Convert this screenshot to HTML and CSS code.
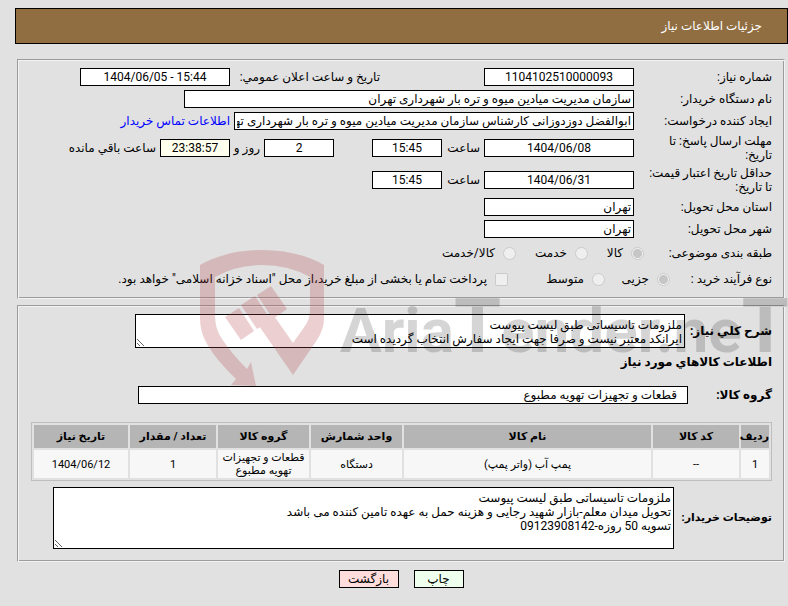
FILE: index.html
```
<!DOCTYPE html>
<html lang="fa" dir="rtl">
<head>
<meta charset="utf-8">
<title>جزئیات اطلاعات نیاز</title>
<link rel="stylesheet" href="styles.css">
</head>
<body>
<header class="title-bar">جزئیات اطلاعات نیاز</header>
<main>
<form class="need">
  <section class="panel summary">
    <div class="row">
      <label class="name" for="no">شماره نیاز:</label>
      <input class="field center w150" id="no" value="1104102510000093" readonly>
      <label class="second" for="announce">تاریخ و ساعت اعلان عمومي:</label>
      <input class="field center w150" id="announce" dir="ltr" value="1404/06/05 - 15:44" readonly>
    </div>
    <div class="row">
      <label class="name" for="org">نام دستگاه خریدار:</label>
      <input class="field w450" id="org" value="سازمان مدیریت میادین میوه و تره بار شهرداری تهران" readonly>
    </div>
    <div class="row">
      <label class="name" for="creator">ایجاد کننده درخواست:</label>
      <input class="field w400" id="creator" value="ابوالفضل دوزدوزانی کارشناس سازمان مدیریت میادین میوه و تره بار شهرداری تهران" readonly>
      <a class="contact" href="#">اطلاعات تماس خریدار</a>
    </div>
    <div class="row tall">
      <label class="name" for="deadline">مهلت ارسال پاسخ: تا<br>تاریخ:</label>
      <input class="field center w150" id="deadline" dir="ltr" value="1404/06/08" readonly>
      <label class="hour" for="deadline-hour">ساعت</label>
      <input class="field center w70" id="deadline-hour" value="15:45" readonly>
      <input class="field center w70 days" aria-label="روز" value="2" readonly>
      <span class="and">روز و</span>
      <input class="field center w70 timer" id="remain" value="23:38:57" readonly>
      <label class="unit" for="remain">ساعت باقي مانده</label>
    </div>
    <div class="row tall">
      <label class="name" for="valid">حداقل تاریخ اعتبار قیمت:<br>تا تاریخ:</label>
      <input class="field center w150" id="valid" dir="ltr" value="1404/06/31" readonly>
      <label class="hour" for="valid-hour">ساعت</label>
      <input class="field center w70" id="valid-hour" value="15:45" readonly>
    </div>
    <div class="row">
      <label class="name" for="province">استان محل تحویل:</label>
      <input class="field w150" id="province" value="تهران" readonly>
    </div>
    <div class="row">
      <label class="name" for="city">شهر محل تحویل:</label>
      <input class="field w150" id="city" value="تهران" readonly>
    </div>
    <div class="row options subject">
      <span>طبقه بندی موضوعی:</span>
      <label><input type="radio" name="subject" checked disabled>کالا</label>
      <label><input type="radio" name="subject" disabled>خدمت</label>
      <label><input type="radio" name="subject" disabled>کالا/خدمت</label>
    </div>
    <div class="row options process">
      <span>نوع فرآیند خرید :</span>
      <label><input type="radio" name="process" checked disabled>جزیی</label>
      <label><input type="radio" name="process" disabled>متوسط</label>
      <label><input type="checkbox" disabled>پرداخت تمام یا بخشی از مبلغ خرید،از محل "اسناد خزانه اسلامی" خواهد بود.</label>
    </div>
  </section>

  <section class="panel goods">
    <div class="line general">
      <label for="general">شرح کلي نیاز:</label>
      <textarea id="general" readonly>ملزومات تاسیساتی طبق لیست پیوست
ایرانکد معتبر نیست و صرفا جهت ایجاد سفارش انتخاب گردیده است</textarea>
    </div>
    <h2>اطلاعات کالاهاي مورد نیاز</h2>
    <div class="line group">
      <label for="group">گروه کالا:</label>
      <input class="field" id="group" value="قطعات و تجهیزات تهویه مطبوع" readonly>
    </div>
    <table>
      <colgroup><col class="c-row"><col class="c-code"><col><col class="c-unit"><col class="c-unit"><col class="c-code"><col class="c-date"></colgroup>
      <thead>
        <tr><th>ردیف</th><th>کد کالا</th><th>نام کالا</th><th>واحد شمارش</th><th>گروه کالا</th><th>تعداد / مقدار</th><th>تاریخ نیاز</th></tr>
      </thead>
      <tbody>
        <tr><td>1</td><td>--</td><td>پمپ آب (واتر پمپ)</td><td>دستگاه</td><td>قطعات و تجهیزات تهویه مطبوع</td><td>1</td><td dir="ltr">1404/06/12</td></tr>
      </tbody>
    </table>
    <div class="line notes">
      <label for="notes">توضیحات خریدار:</label>
      <textarea id="notes" readonly>ملزومات تاسیساتی طبق لیست پیوست
تحویل میدان معلم-بازار شهید رجایی و هزینه حمل به عهده تامین کننده می باشد
تسویه 50 روزه-09123908142</textarea>
    </div>
  </section>

  <div class="actions">
    <button type="button" class="print">چاپ</button>
    <button type="button" class="back">بازگشت</button>
  </div>
</form>
</main>
<div class="watermark" dir="ltr">
  <svg width="125" height="137" viewBox="0 0 125 137" aria-hidden="true">
    <path d="M0 15Q27 0 62 0Q98 0 124 15V68Q124 79 117 90L93 125L57 73L72 63L93 93L105 76Q110 69 110 60V27Q89 15 62 15Q36 15 15 27V66Q15 79 22 89Q32 104 47 119L51 112L56 136L31 135L36 129Q17 111 7 94Q0 82 0 68Z"/>
    <path d="M25 67L39 58L54 81L41 90ZM41 55L55 46L71 70L57 79ZM57 45L71 36L87 59L73 69Z"/>
  </svg>
  <span class="brand">Aria<span class="cap">T</span>ender.ne<span class="cap">T</span></span>
</div>
</body>
</html>
```
FILE: styles.css
```
* { box-sizing: border-box; }

body {
  position: relative;
  margin: 0;
  padding: 8px 0 0 15px;
  overflow-x: hidden;
  background: #e1e1e1;
  color: #000;
  font: 12px/14px Roboto, "DejaVu Sans", sans-serif;
}

input, textarea, button { font: inherit; color: inherit; border-radius: 0; }

.title-bar {
  padding: 10px 25px;
  border: 1px solid #000;
  background: #906e42;
  color: #fff;
}

.need { margin: 15px 3px 0 2px; }

.panel {
  border: 1px solid;
  border-color: #9c9c9c #f2f2f2 #f2f2f2 #9c9c9c;
  box-shadow: inset 1px 1px #f2f2f2, inset -1px -1px #9c9c9c;
  padding: 6px 12px 6px 13px;
  margin-bottom: 6px;
}

.row {
  display: flex;
  align-items: center;
  gap: 4px;
  min-height: 22px;
  white-space: nowrap;
}
.row.tall { min-height: 32px; }

.name { flex: 0 0 134px; }
.second { flex: 0 0 146px; margin-right: 100px; }

.field {
  height: 18px;
  min-width: 0;
  margin: 0;
  padding: 0 2px;
  border: 1px solid #000;
  background: #fff;
}
.center { text-align: center; }
.w70 { width: 70px; }
.w150 { width: 150px; }
.w400 { width: 400px; }
.w450 { width: 450px; }
.days { margin-right: 34px; }
.hour { width: 34px; }
.and { width: 26px; }
.timer { background: #ffffee; }

.contact { color: #0000ff; text-decoration: none; }

.options {
  display: grid;
  justify-content: start;
  gap: 0;
  min-height: 26px;
}
.options label { display: flex; align-items: center; gap: 8px; }
.subject { grid-template-columns: 128px 56px 72px auto; }
.process { grid-template-columns: 102px 65px 97px auto; }

.options input {
  appearance: none;
  flex: none;
  width: 13px;
  height: 13px;
  margin: 0;
  border: 1px solid #cbcbcb;
  background: #efefef;
}
.options input[type="radio"] { border-radius: 50%; }
.options input[type="checkbox"] { border-radius: 2px; }
.options input[type="radio"]:checked {
  background: radial-gradient(circle, #c6c6c6 4px, #efefef 5px);
}

.goods { padding-top: 8px; padding-bottom: 12px; }

.line { display: flex; align-items: center; font-weight: bold; white-space: nowrap; }
.line .field, textarea { flex: 1; font-weight: normal; }

textarea {
  display: block;
  margin: 0;
  padding: 3px 2px 0;
  border: 1px solid #000;
  background: #fff;
  overflow: hidden;
  white-space: pre-wrap;
}

.general label { width: 87px; }
.general textarea { height: 34px; margin-left: 104px; }
.group label { width: 84px; }
.group .field { margin-left: 107px; padding-right: 10px; }
.notes label { flex: 0 0 98px; font-size: 11px; }
.notes textarea { height: 62px; margin-left: 22px; }

h2 { margin: 7px 0 17px; font-size: 12px; line-height: 14px; }

table {
  width: 100%;
  margin: 18px 0 6px;
  table-layout: fixed;
  border: 1px solid #bebebe;
  border-collapse: separate;
  border-spacing: 2px;
  font-size: 11px;
  line-height: 13px;
  text-align: center;
}
th { height: 23px; padding: 0; background: #b5b5b5; }
td { height: 28px; padding: 0 4px; background: #f7f7f7; }
.c-row { width: 28px; }
.c-code { width: 86px; }
.c-unit { width: 91px; }
.c-date { width: 94px; }

.actions {
  display: flex;
  justify-content: center;
  gap: 15px;
  margin-top: 8px;
}
.actions button { height: 18px; padding: 0; border: 1px solid #000; line-height: 14px; }
.print { width: 50px; background: #eeffee; }
.back { width: 60px; background: #ffdddd; }

/* Brand mark laid over the form */
.watermark {
  position: absolute;
  top: 250px;
  left: 200px;
  display: flex;
  gap: 15px;
  pointer-events: none;
}
.watermark svg { flex: none; fill: #b3434b; opacity: 0.25; }
.brand {
  color: #000;
  opacity: 0.16;
  font: bold 62px/152px Roboto, sans-serif;
}
.brand .cap { font-size: 76px; }
```
